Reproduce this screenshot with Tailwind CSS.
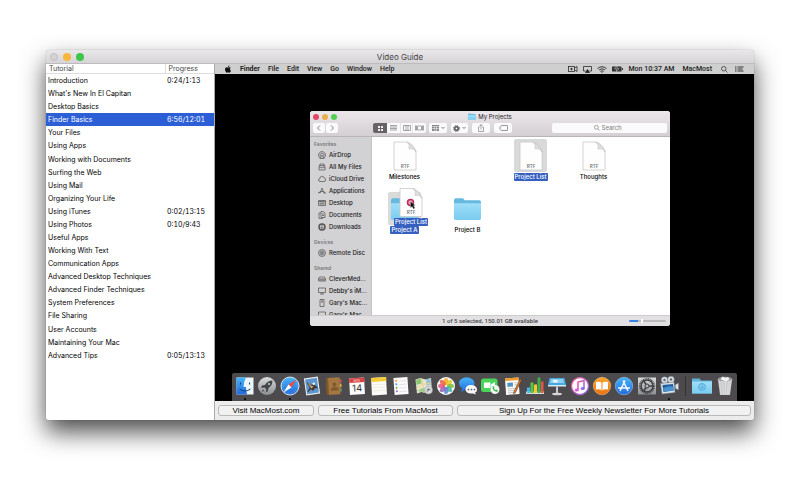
<!DOCTYPE html>
<html lang="en">
<head>
  <meta charset="UTF-8" />
  <meta name="viewport" content="width=device-width, initial-scale=1.0"/>
  <title>Video Guide</title>
  <script src="https://cdn.jsdelivr.net/npm/@tailwindcss/browser@4"></script>
</head>
<body class="bg-white text-black font-[Inter,sans-serif]">

  <!-- Shared symbols -->
  <svg class="absolute size-0" aria-hidden="true">
    <defs>
      <linearGradient id="sky" x1="0" y1="0" x2="0" y2="1"><stop offset="0" stop-color="#a0def8"/><stop offset="1" stop-color="#7accf0"/></linearGradient>
      <linearGradient id="blue" x1="0" y1="0" x2="0" y2="1"><stop offset="0" stop-color="#46b4f8"/><stop offset="1" stop-color="#2269dc"/></linearGradient>
      <linearGradient id="silver" x1="0" y1="0" x2="0" y2="1"><stop offset="0" stop-color="#d9dbdc"/><stop offset="1" stop-color="#8c9093"/></linearGradient>
      <linearGradient id="orange" x1="0" y1="0" x2="0" y2="1"><stop offset="0" stop-color="#fba52d"/><stop offset="1" stop-color="#ea7210"/></linearGradient>
      <linearGradient id="pink" x1="0" y1="0" x2="1" y2="1"><stop offset="0" stop-color="#f6529a"/><stop offset="1" stop-color="#8c68ea"/></linearGradient>
    </defs>
    <symbol id="folder" viewBox="0 0 30 24">
      <path d="M1 4q0-3 2-3h7q1 0 2 2h15q2 0 2 2v16q0 2-2 2H3q-2 0-2-2z" fill="#66b9df"/>
      <path d="M1 6h28v15q0 2-2 2H3q-2 0-2-2z" fill="url(#sky)"/>
    </symbol>
    <symbol id="rtf" viewBox="0 0 24 30">
      <path d="M1 1h14q5 3 8 9v19H1z" fill="#fefefe" stroke="#c9c9c9" stroke-width=".8"/>
      <path d="M14 1q3 2 2 7 5-1 7 3-2-7-9-10z" fill="#dedede" stroke="#b9b9b9" stroke-width=".5"/>
      <text x="12" y="26.500" text-anchor="middle" font-size="4.500" font-weight="600" fill="#777">RTF</text>
    </symbol>
  </svg>

  <main class="h-screen overflow-hidden pt-[50px] px-[46px] pb-20">
    <section class="flex h-full flex-col rounded-[3px] bg-[#ececec] shadow-[0_12px_24px_rgba(0,0,0,0.7),0_0_1px_rgba(0,0,0,0.5)]">

      <!-- Title bar -->
      <header class="grid h-[14px] shrink-0 grid-cols-3 items-center rounded-t-[3px] border-b border-[#bdbbbd] bg-linear-to-b from-[#e9e7e9] to-[#d6d4d6] px-1">
        <div class="flex gap-[5px]">
          <button aria-label="Close" class="size-2 rounded-full border border-[#c0c0c0] bg-[#d2d3d2]"></button>
          <button aria-label="Minimize" class="size-2 rounded-full bg-[#f6b73c]"></button>
          <button aria-label="Zoom" class="size-2 rounded-full bg-[#3fc548]"></button>
        </div>
        <h1 class="text-center text-[8px] leading-[12px] text-[#444]">Video Guide</h1>
      </header>

      <div class="flex min-h-0 flex-1">
        <!-- Tutorial list -->
        <aside class="w-[169px] shrink-0 overflow-hidden rounded-bl-[3px] border-r border-[#aaa] bg-white">
          <table class="h-[298px] w-full table-fixed border-collapse text-left text-[7px] leading-[13px]">
            <thead>
              <tr class="h-[9px] border-b border-[#ddd] leading-[9px] text-[#444]">
                <th class="w-[119px] border-r border-[#ddd] p-0 pl-[3px] font-normal">Tutorial</th>
                <th class="p-0 pl-[3px] font-normal">Progress</th>
              </tr>
            </thead>
            <tbody id="tutorials"></tbody>
          </table>
        </aside>

        <div class="flex min-w-0 flex-1 flex-col">
          <!-- Menu bar -->
          <nav class="flex h-[10px] shrink-0 items-center bg-[#cfcfcf] pl-[9px] pr-[10px] font-[Roboto,sans-serif] text-[7px] leading-[10px] font-medium text-[#222]">
            <svg class="mr-2 size-2" viewBox="0 0 24 24" fill="#111"><path d="M16.400 1.400c0 1.200-.5 2.300-1.200 3.100-.7.900-2 1.600-3 1.600-.5-1.300.2-2.600.9-3.400.8-.9 2.100-1.600 3.300-1.300zM21 17.100c0 .1-.5 1.600-1.500 3.100-1 1.400-2 2.800-3.500 2.800s-1.900-.9-3.600-.9-2.300.9-3.700.9-2.300-1.300-3.400-2.800C4 18.400 3 15.600 3 13c0-4.300 2.800-6.600 5.500-6.600 1.500 0 2.700 1 3.600 1s2.200-1 3.900-1c.6 0 2.900 0 4.400 2.200-.1.100-2.400 1.400-2.400 4.200 0 3.200 2.900 4.300 3 4.300z"/></svg>
            <div class="flex gap-2">
              <a href="#" class="font-bold">Finder</a>
              <a href="#">File</a>
              <a href="#">Edit</a>
              <a href="#">View</a>
              <a href="#">Go</a>
              <a href="#">Window</a>
              <a href="#">Help</a>
            </div>
            <div class="ml-auto flex items-center gap-[5px]">
              <svg class="h-[6px] w-[10px]" viewBox="0 0 20 12" fill="none" stroke="#222" stroke-width="1.500"><rect x="1" y="1" width="12" height="10"/><circle cx="7" cy="6" r="1.500" fill="#222"/><path d="M13 4l5-3v10l-5-3"/></svg>
              <svg class="h-[7px] w-[9px]" viewBox="0 0 18 14" fill="none" stroke="#222" stroke-width="1.500"><path d="M5 10H1V1h16v9h-4"/><path d="M9 7l4 6H5z" fill="#222"/></svg>
              <svg class="h-[7px] w-[10px]" viewBox="0 0 20 14" fill="none" stroke="#222" stroke-width="1.800"><path d="M1 5q9-7 18 0M4 8q6-5 12 0M7 11q3-3 6 0"/><circle cx="10" cy="12.500" r="1" fill="#222" stroke="none"/></svg>
              <svg class="h-[6px] w-[11px]" viewBox="0 0 22 12"><rect x="0" y="1" width="19" height="10" rx="1" fill="#333"/><path d="M20 4h2v4h-2z" fill="#333"/><path d="M8 1l-3 5h4v5l5-6h-4V1z" fill="#333" stroke="#ddd" stroke-width="1"/></svg>
              <span>Mon 10:37 AM</span>
              <span class="ml-[3px]">MacMost</span>
              <svg class="ml-[4px] size-[7px]" viewBox="0 0 14 14" fill="none" stroke="#333" stroke-width="1.500"><circle cx="5.500" cy="5.500" r="4.500"/><path d="M9 9l4 4"/></svg>
              <svg class="ml-[2px] h-[6px] w-[9px]" viewBox="0 0 18 12" stroke="#222" stroke-width="1.800"><path d="M0 2h3M5 2h12M0 6h3M5 6h10M0 10h3M5 10h12"/></svg>
            </div>
          </nav>

          <!-- Desktop -->
          <div class="relative min-h-0 flex-1 bg-black">

            <!-- Finder window -->
            <section class="absolute left-[95px] top-[37px] flex h-[215px] w-[360px] flex-col overflow-hidden rounded-[3px] bg-white text-[6px] leading-[8px] font-medium text-[#222]">
              <header class="flex h-[26px] shrink-0 flex-col border-b border-[#b8b4b8] bg-linear-to-b from-[#ebe7eb] to-[#d3cfd3]">
                <div class="grid h-[11px] grid-cols-3 items-center px-[3px]">
                  <div class="flex gap-[3px]">
                    <button aria-label="Close" class="size-[6px] rounded-full bg-[#e2476a]"></button>
                    <button aria-label="Minimize" class="size-[6px] rounded-full bg-[#e8b04a]"></button>
                    <button aria-label="Zoom" class="size-[6px] rounded-full bg-[#52d053]"></button>
                  </div>
                  <h2 class="flex items-center justify-center gap-[2px] font-normal"><svg class="h-[7px] w-2"><use href="#folder"/></svg>My Projects</h2>
                </div>
                <div class="flex h-3 items-center px-[3px]">
                  <div class="flex gap-px">
                    <button aria-label="Back" class="grid h-[10px] w-3 place-items-center rounded-[2px] bg-[#fafafa]"><svg class="size-[6px]" viewBox="0 0 12 12" fill="none" stroke="#555" stroke-width="1.500"><path d="M8 1L3 6l5 5"/></svg></button>
                    <button aria-label="Forward" class="grid h-[10px] w-3 place-items-center rounded-[2px] bg-[#fafafa]"><svg class="size-[6px]" viewBox="0 0 12 12" fill="none" stroke="#555" stroke-width="1.500"><path d="M4 1l5 5-5 5"/></svg></button>
                  </div>
                  <div class="ml-[35px] flex h-[10px] overflow-hidden rounded-[2px] bg-[#fafafa]">
                    <button aria-label="Icons" class="grid w-[14px] place-items-center bg-[#666467]"><svg class="size-[5px]" viewBox="0 0 10 10" fill="#eee"><path d="M0 0h4v4H0zM6 0h4v4H6zM0 6h4v4H0zM6 6h4v4H6z"/></svg></button>
                    <button aria-label="List" class="grid w-[13px] place-items-center"><svg class="h-[6px] w-[7px]" viewBox="0 0 14 12" stroke="#888" stroke-width="1.500"><path d="M0 1h14M0 4h14M0 7h14M0 10h14"/></svg></button>
                    <button aria-label="Columns" class="grid w-[13px] place-items-center border-x border-[#e4e4e4]"><svg class="h-[6px] w-[8px]" viewBox="0 0 16 12" fill="none" stroke="#888" stroke-width="1.500"><path d="M1 1h14v10H1zM6 1v10M10 1v10"/></svg></button>
                    <button aria-label="Cover Flow" class="grid w-[13px] place-items-center"><svg class="h-[6px] w-[9px]" viewBox="0 0 18 12" fill="none" stroke="#888" stroke-width="1.500"><path d="M5 2h8v8H5zM1 1v10M3 1v10M15 1v10M17 1v10"/></svg></button>
                  </div>
                  <button aria-label="Arrange" class="ml-[3px] flex h-[10px] w-[18px] items-center justify-center gap-[2px] rounded-[2px] bg-[#fafafa]"><svg class="h-[6px] w-[7px]" viewBox="0 0 14 12" fill="#888"><path d="M0 0h14v2H0zM0 3h4v4H0zM5 3h4v4H5zM10 3h4v4h-4zM0 8h4v4H0zM5 8h4v4H5zM10 8h4v4h-4z"/></svg><svg class="size-1" viewBox="0 0 8 8" fill="none" stroke="#555" stroke-width="1.500"><path d="M1 2l3 3 3-3"/></svg></button>
                  <button aria-label="Action" class="ml-1 flex h-[10px] w-[17px] items-center justify-center gap-[2px] rounded-[2px] bg-[#fafafa]"><svg class="size-[7px]" viewBox="0 0 14 14" fill="none" stroke="#555"><circle cx="7" cy="7" r="6" stroke-width="2" stroke-dasharray="2.400 2.300"/><circle cx="7" cy="7" r="3.500" stroke-width="3"/></svg><svg class="size-1" viewBox="0 0 8 8" fill="none" stroke="#555" stroke-width="1.500"><path d="M1 2l3 3 3-3"/></svg></button>
                  <button aria-label="Share" class="ml-1 grid h-[10px] w-[18px] place-items-center rounded-[2px] bg-[#fafafa]"><svg class="size-[8px]" viewBox="0 0 16 16" fill="none" stroke="#777" stroke-width="1.300"><path d="M5 6H3v9h10V6h-2M8 11V1M5 4l3-3 3 3"/></svg></button>
                  <button aria-label="Tags" class="ml-1 grid h-[10px] w-[18px] place-items-center rounded-[2px] bg-[#fafafa]"><svg class="h-[6px] w-[9px]" viewBox="0 0 18 12" fill="none" stroke="#777" stroke-width="1.500"><path d="M1 6l4-5h11q1 0 1 1v8q0 1-1 1H5z"/></svg></button>
                  <label class="ml-auto flex h-[10px] w-[115px] items-center justify-center gap-[2px] rounded-[2px] bg-[#fafafa]">
                    <svg class="size-[6px]" viewBox="0 0 14 14" fill="none" stroke="#777" stroke-width="1.500"><circle cx="5.500" cy="5.500" r="4.500"/><path d="M9 9l4 4"/></svg>
                    <input type="text" aria-label="Search" placeholder="Search" class="w-6 bg-transparent outline-none placeholder:text-[#888]" />
                  </label>
                </div>
              </header>

              <div class="flex min-h-0 flex-1">
                <nav class="w-[62px] shrink-0 overflow-hidden border-r border-[#c4c4c6] bg-[#d2d1d4] pl-1 pt-[2px]">
                  <h3 class="text-[5px] leading-[10px] font-semibold text-[#777]">Favorites</h3>
                  <ul id="favorites"></ul>
                  <h3 class="mt-1 text-[5px] leading-[10px] font-semibold text-[#777]">Devices</h3>
                  <ul id="devices"></ul>
                  <h3 class="mt-1 text-[5px] leading-[10px] font-semibold text-[#777]">Shared</h3>
                  <ul id="shared"></ul>
                </nav>

                <!-- Files -->
                <div class="grid flex-1 grid-cols-[repeat(4,63px)] content-start gap-y-[11px] pl-px pt-[2px] text-black">
                  <figure class="flex flex-col items-center gap-px">
                    <div class="grid size-[33px] place-items-center"><svg class="h-[30px] w-6"><use href="#rtf"/></svg></div>
                    <figcaption class="px-[2px]">Milestones</figcaption>
                  </figure>
                  <figure class="col-start-3 flex flex-col items-center gap-px">
                    <div class="grid size-[33px] place-items-center rounded-[2px] bg-[#d9d9d9]"><svg class="h-[30px] w-6"><use href="#rtf"/></svg></div>
                    <figcaption class="rounded-[1px] bg-[#3560bf] px-px text-white">Project List</figcaption>
                  </figure>
                  <figure class="flex flex-col items-center gap-px">
                    <div class="grid size-[33px] place-items-center"><svg class="h-[30px] w-6"><use href="#rtf"/></svg></div>
                    <figcaption class="px-[2px]">Thoughts</figcaption>
                  </figure>
                  <figure class="relative flex flex-col items-center gap-px">
                    <div class="grid size-[33px] place-items-center rounded-[2px] bg-[#dadada]"><svg class="h-6 w-[29px]"><use href="#folder"/></svg></div>
                    <figcaption class="rounded-[1px] bg-[#3560bf] px-px text-white">Project A</figcaption>
                    <!-- File being dragged onto the folder -->
                    <div class="absolute -top-[5px] left-[21px] flex flex-col items-center">
                      <svg class="h-[31px] w-6"><use href="#rtf"/></svg>
                      <span class="rounded-[1px] bg-[#3560bf] px-px whitespace-nowrap text-white">Project List</span>
                      <svg class="absolute left-[12px] top-[11px] size-3" viewBox="0 0 24 24"><circle cx="9" cy="9" r="6" fill="#eb9cb2" stroke="#ba2d59" stroke-width="3"/><path d="M9 7v13l3-3 3 5 3-2-3-5h4z" fill="#111" stroke="#fff" stroke-width=".5"/></svg>
                    </div>
                  </figure>
                  <figure class="flex flex-col items-center gap-px">
                    <div class="grid size-[33px] place-items-center"><svg class="h-6 w-[29px]"><use href="#folder"/></svg></div>
                    <figcaption class="px-[2px]">Project B</figcaption>
                  </figure>
                </div>
              </div>

              <footer class="relative flex h-[11px] shrink-0 items-center justify-center border-t border-[#ccc] bg-[#e2e0e3] font-[Roboto,sans-serif] text-[#444]">
                <p>1 of 5 selected, 150.01 GB available</p>
                <input type="range" aria-label="Icon size" value="35" class="absolute right-1 h-[2px] w-[37px] appearance-none rounded bg-linear-to-r from-[#3b82e6] from-25% to-[#bbb] to-25% [&::-webkit-slider-thumb]:h-1 [&::-webkit-slider-thumb]:w-[2px] [&::-webkit-slider-thumb]:appearance-none [&::-webkit-slider-thumb]:bg-white" />
              </footer>
            </section>

            <!-- Dock -->
            <div class="absolute inset-x-[17px] bottom-0 flex h-7 items-start rounded-t-[2px] bg-[#4c4a4d] pl-[3px] pr-[2px] pt-[3px]">
              <div class="flex w-[444px] justify-between">
                <!-- Finder -->
                <div class="flex flex-col items-center gap-[2px]">
                  <svg class="size-5" viewBox="0 0 40 40"><path d="M3 3h34v34H3z" fill="#eef5fa"/><path d="M3 3h19q-5 9-5 19h5q0 8 2 15H3z" fill="url(#blue)"/><path d="M11 13v4M29 13v4M9 26q11 8 22 0" fill="none" stroke="#143f70" stroke-width="2"/></svg>
                  <span class="size-[2px] rounded-full bg-black"></span>
                </div>
                <!-- Launchpad -->
                <svg class="size-5" viewBox="0 0 40 40"><circle cx="20" cy="20" r="18" fill="url(#silver)"/><path d="M31 9q-10 0-15 9l-6 1-2 5 7-1 4 4-2 6 5-3 1-6q8-5 8-15zM12 27l-3 5 6-3z" fill="#424549"/><circle cx="24" cy="16" r="2" fill="#ccc"/></svg>
                <!-- Safari -->
                <div class="flex flex-col items-center gap-[2px]">
                  <svg class="size-5" viewBox="0 0 40 40"><circle cx="20" cy="20" r="18" fill="url(#blue)" stroke="#dbe7ee" stroke-width="2"/><circle cx="20" cy="20" r="14" fill="none" stroke="#a5dbfb" stroke-dasharray="1 2"/><path d="M33 7L17 17l6 6z" fill="#f04a3e"/><path d="M7 33l10-16 6 6z" fill="#fff"/></svg>
                  <span class="size-[2px] rounded-full bg-black"></span>
                </div>
                <!-- Mail -->
                <svg class="size-5" viewBox="0 0 40 40"><g transform="rotate(-8 20 20)"><path d="M6 3h28v34H6z" fill="#f3f3ee"/><path d="M8 5h24v30H8z" fill="#5d97d1"/><path d="M9 30l6-7-5-13 9 8 5-4 2 5 6 7-7-1-4 5-4-4-6 5z" fill="#453a32"/><path d="M12 12l7 8 4 1-5 4z" fill="#d8b480"/><circle cx="24" cy="16" r="2.500" fill="#fff"/></g></svg>
                <!-- Contacts -->
                <svg class="size-5" viewBox="0 0 40 40"><g transform="rotate(-3 20 20)"><path d="M5 3h27v34H5z" fill="#a47740"/><path d="M5 3h4v34H5z" fill="#7d5527"/><path d="M32 7h3v7h-3z" fill="#d55"/><path d="M32 16h3v7h-3z" fill="#d9b84a"/><path d="M32 25h3v7h-3z" fill="#6a9c5c"/><circle cx="21" cy="17" r="4" fill="#83592c"/><path d="M13 29q0-7 8-7t8 7z" fill="#83592c"/></g></svg>
                <!-- Calendar -->
                <svg class="size-5" viewBox="0 0 40 40"><g transform="rotate(-3 20 20)"><path d="M5 4h30v33H5z" fill="#fafafa"/><path d="M5 4h30v9H5z" fill="#d94343"/><text x="20" y="11" text-anchor="middle" font-size="6" fill="#fff">NOV</text><text x="20" y="31" text-anchor="middle" font-size="19" fill="#333">14</text></g></svg>
                <!-- Notes -->
                <svg class="size-5" viewBox="0 0 40 40"><g transform="rotate(-3 20 20)"><path d="M5 3h30v35H5z" fill="#fbfaf4"/><path d="M5 3h30v8H5z" fill="#f3cc38"/><path d="M7 17h26M7 23h26M7 29h26" stroke="#e1dfd6"/></g></svg>
                <!-- Reminders -->
                <svg class="size-5" viewBox="0 0 40 40"><g transform="rotate(-4 20 20)"><path d="M6 3h28v34H6z" fill="#fbfbfb"/><circle cx="11" cy="9" r="2" fill="#f2a335"/><circle cx="11" cy="16" r="2" fill="#43a4e4"/><circle cx="11" cy="23" r="2" fill="#62b94d"/><circle cx="11" cy="30" r="2" fill="#9c66c5"/><path d="M16 10h15M16 17h15M16 24h15M16 31h15" stroke="#ccc"/></g></svg>
                <!-- Maps -->
                <svg class="size-5" viewBox="0 0 40 40"><path d="M3 7l10-3 10 3 11-3 2 28-11 2-10-2-9 3z" fill="#e6e6d2"/><path d="M4 8l10-3 1 10-10 3z" fill="#8ec66f"/><path d="M24 7l9-2 1 12-9 2z" fill="#8ec3df"/><path d="M5 25l12-8 17-3M17 6l3 27" fill="none" stroke="#efd387" stroke-width="2"/><path d="M6 30l10-6 8 2-4 7z" fill="#a3cd8a"/><circle cx="29" cy="28" r="8" fill="#dadada" stroke="#999"/><path d="M25 32l3-8 5 3z" fill="#718089"/></svg>
                <!-- Photos -->
                <svg class="size-5" viewBox="0 0 40 40"><circle cx="20" cy="20" r="18" fill="#fafafa"/><g fill-opacity=".88"><ellipse cx="20" cy="11" rx="4.500" ry="7" fill="#f7a928"/><ellipse cx="20" cy="11" rx="4.500" ry="7" fill="#e0cd2c" transform="rotate(45 20 20)"/><ellipse cx="20" cy="11" rx="4.500" ry="7" fill="#7fbf40" transform="rotate(90 20 20)"/><ellipse cx="20" cy="11" rx="4.500" ry="7" fill="#48b8a6" transform="rotate(135 20 20)"/><ellipse cx="20" cy="11" rx="4.500" ry="7" fill="#5b87d0" transform="rotate(180 20 20)"/><ellipse cx="20" cy="11" rx="4.500" ry="7" fill="#9866ba" transform="rotate(225 20 20)"/><ellipse cx="20" cy="11" rx="4.500" ry="7" fill="#dc5b8d" transform="rotate(270 20 20)"/><ellipse cx="20" cy="11" rx="4.500" ry="7" fill="#ee6343" transform="rotate(315 20 20)"/></g></svg>
                <!-- Messages -->
                <svg class="size-5" viewBox="0 0 40 40"><path d="M17 3c9 0 16 5 16 12s-7 13-16 13l-4-1q-4 5-8 5 3-3 3-7-6-4-6-10C2 8 8 3 17 3z" fill="url(#blue)"/><path d="M26 18c7 0 12 4 12 9 0 3-1 5-4 6l2 4-6-2c-9 1-15-3-15-8s4-9 11-9z" fill="#f6f6f6"/><circle cx="21" cy="27" r="1.700" fill="#555"/><circle cx="27" cy="27" r="1.700" fill="#555"/><circle cx="33" cy="27" r="1.700" fill="#555"/></svg>
                <!-- FaceTime -->
                <svg class="size-5" viewBox="0 0 40 40"><rect x="2" y="5" width="33" height="27" rx="5" fill="#4bd45a"/><path d="M8 13h13v11H8zM22 17l8-5v13l-8-4z" fill="#fff"/><circle cx="30" cy="27" r="9" fill="#f2f2f2"/><path d="M25 22q0 8 9 10l2-3-3-2-2 1-3-3 1-2-2-3z" fill="#43bc50"/></svg>
                <!-- Pages -->
                <svg class="size-5" viewBox="0 0 40 40"><g transform="rotate(-4 20 20)"><path d="M5 4h27v33H5z" fill="#f8f8f4"/><path d="M5 4h27v5H5z" fill="#f09a28"/><path d="M9 13h11v8H9z" fill="#5291c2"/><path d="M23 14h6M23 18h6M9 25h19M9 29h19M9 33h15" stroke="#999"/></g><path d="M34 6l3 2-12 25-4 3 1-5z" fill="#d8792c" stroke="#5b3823"/></svg>
                <!-- Numbers -->
                <svg class="size-5" viewBox="0 0 40 40"><path d="M2 31h36v5H2z" fill="#d9d9d9"/><path d="M4 23h6v11H4z" fill="#45b8ed"/><path d="M11 13h6v21h-6z" fill="#56c942"/><path d="M18 17h6v17h-6z" fill="#f6c938"/><path d="M25 3h6v31h-6z" fill="#3eb04b"/><path d="M32 11h5v23h-5z" fill="#e85445"/></svg>
                <!-- Keynote -->
                <svg class="size-5" viewBox="0 0 40 40"><path d="M5 4h30l3 14H2z" fill="#48a9df"/><path d="M8 6h24l2 8H6z" fill="#8dd0ef"/><path d="M12 8h9v5h-9z" fill="#eefaff"/><path d="M2 18h36v3H2z" fill="#d8edf6"/><path d="M18 21h4v14h-4z" fill="#c5cbd0"/><ellipse cx="20" cy="36" rx="10" ry="2.500" fill="#d3d7d9"/></svg>
                <!-- iTunes -->
                <svg class="size-5" viewBox="0 0 40 40"><circle cx="20" cy="20" r="17" fill="#fbf9fc" stroke="url(#pink)" stroke-width="2.500"/><path d="M16 28V12l12-3v16" fill="none" stroke="url(#pink)" stroke-width="3"/><ellipse cx="13.500" cy="28" rx="4" ry="3" fill="#d75dcd"/><ellipse cx="25.500" cy="25" rx="4" ry="3" fill="#8c68ea"/></svg>
                <!-- iBooks -->
                <svg class="size-5" viewBox="0 0 40 40"><circle cx="20" cy="20" r="17.500" fill="url(#orange)" stroke="#f7c489"/><path d="M20 14q-5-4-12-2v15q7-2 12 2 5-4 12-2V12q-7-2-12 2z" fill="#fff"/><path d="M20 14v14" stroke="#ee8520" stroke-width="2"/></svg>
                <!-- App Store -->
                <svg class="size-5" viewBox="0 0 40 40"><circle cx="20" cy="20" r="17.500" fill="url(#blue)" stroke="#a9d3f3"/><path d="M22 9L12 30M18 9l10 21M8 24h24" fill="none" stroke="#f7fbff" stroke-width="3"/></svg>
                <!-- System Preferences -->
                <svg class="size-5" viewBox="0 0 40 40"><path d="M2 3h36v34H2z" fill="url(#silver)"/><g fill="none" stroke="#3c3e40"><circle cx="20" cy="20" r="14.500" stroke-width="3" stroke-dasharray="2 1.500"/><circle cx="20" cy="20" r="12" stroke-width="3"/><circle cx="20" cy="20" r="4" stroke-width="2"/><path d="M24 20h9M18 17l-5-8M18 23l-5 8" stroke-width="3"/></g></svg>
                <!-- Movie recorder -->
                <div class="flex flex-col items-center gap-[2px]">
                  <svg class="size-5" viewBox="0 0 40 40"><g fill="#dce3e8" stroke="#777f88"><circle cx="11" cy="8" r="6.500"/><circle cx="24" cy="7" r="6.500"/><path d="M3 15l27-3 2 21-26 3zM32 18l7-4v14l-6-3z"/></g><path d="M7 18l21-2 1 13-20 3z" fill="#245d9f"/><path d="M8 25q11-7 21-3l1 7-21 2z" fill="#4794d0"/><circle cx="11" cy="8" r="2.500" fill="#667"/><circle cx="24" cy="7" r="2.500" fill="#667"/></svg>
                  <span class="size-[2px] rounded-full bg-black"></span>
                </div>
              </div>
              <span class="ml-[6px] h-5 w-px bg-[#333]"></span>
              <!-- Downloads and trash -->
              <svg class="ml-auto mr-[3px] size-5" viewBox="0 0 40 40"><path d="M0 5h15l3 4h22v26H0z" fill="#61b2da"/><path d="M0 11h40v24H0z" fill="url(#sky)"/><circle cx="20" cy="22" r="7" fill="#83cbed" stroke="#55addb" stroke-width="2"/><path d="M20 17v9M16 22l4 4 4-4" fill="none" stroke="#55addb" stroke-width="2"/></svg>
              <svg class="size-5" viewBox="0 0 40 40"><path d="M6 7h28l-4 31H10z" fill="#c9cccd"/><path d="M9 9l3 27M15 9l2 28M21 9v28M27 9l-2 28M32 9l-4 27" stroke="#eee"/><ellipse cx="20" cy="7" rx="14" ry="4.500" fill="#8c8f90" stroke="#eee"/><path d="M11 7l4-6 6 3 5-2 3 6-8 3z" fill="#f2f2f2"/></svg>
            </div>
          </div>

          <!-- Bottom buttons -->
          <footer class="flex h-[19px] shrink-0 items-center gap-1 rounded-br-[3px] bg-[#ececec] px-[3px] font-['Liberation_Sans',sans-serif] text-[8px] leading-[9px]">
            <button class="h-[11px] w-24 rounded-[3px] border border-[#b9b9b9] bg-[#f1f1f1]">Visit MacMost.com</button>
            <button class="h-[11px] w-[135px] rounded-[3px] border border-[#b9b9b9] bg-[#f1f1f1]">Free Tutorials From MacMost</button>
            <button class="h-[11px] flex-1 rounded-[3px] border border-[#b9b9b9] bg-[#f1f1f1]">Sign Up For the Free Weekly Newsletter For More Tutorials</button>
          </footer>
        </div>
      </div>
    </section>
  </main>

  <script>
    const tutorials = [
      ["Introduction", "0:24/1:13"],
      ["What's New In El Capitan", ""],
      ["Desktop Basics", ""],
      ["Finder Basics", "6:56/12:01"],
      ["Your Files", ""],
      ["Using Apps", ""],
      ["Working with Documents", ""],
      ["Surfing the Web", ""],
      ["Using Mail", ""],
      ["Organizing Your Life", ""],
      ["Using iTunes", "0:02/13:15"],
      ["Using Photos", "0:10/9:43"],
      ["Useful Apps", ""],
      ["Working With Text", ""],
      ["Communication Apps", ""],
      ["Advanced Desktop Techniques", ""],
      ["Advanced Finder Techniques", ""],
      ["System Preferences", ""],
      ["File Sharing", ""],
      ["User Accounts", ""],
      ["Maintaining Your Mac", ""],
      ["Advanced Tips", "0:05/13:13"]
    ];

    document.getElementById("tutorials").innerHTML = tutorials.map(([name, progress]) => `
      <tr class="${name === "Finder Basics" ? "bg-[#2c5fd6] text-white" : ""}">
        <td class="p-0 pl-[2px] whitespace-nowrap">${name}</td>
        <td class="p-0 pl-[2px] tabular-nums">${progress}</td>
      </tr>`).join("");

    // 16x16 outlines for the Finder sidebar
    const icons = {
      airdrop: '<path d="M4 14a7 7 0 1 1 8 0M5 11a4 4 0 1 1 6 0M8 8l4 7H4z"/>',
      files: '<path d="M2 8l2-6h8l2 6v6H2zM2 8h4l1 2h2l1-2h4M4 5h8"/>',
      cloud: '<path d="M4 13a3 3 0 0 1 0-6 4 4 0 0 1 8-1 3.500 3.500 0 0 1 0 7z"/>',
      apps: '<path d="M4 12L8 2l4 10M5 9h6M1 13l3-4M12 9l3 4M1 11h4M11 12h4"/>',
      desktop: '<path d="M1 3h14v10H1zM1 5h14M3 8h10M3 10h10"/>',
      docs: '<path d="M6 1h5l3 3v9H6zM6 4H2v11h7v-2M8 6h4M8 9h4"/>',
      down: '<circle cx="8" cy="8" r="6" stroke-width="3"/><path d="M8 4v7M5 8l3 3 3-3"/>',
      disc: '<circle cx="8" cy="8" r="7"/><circle cx="8" cy="8" r="4"/><circle cx="8" cy="8" r="1.500"/>',
      drive: '<path d="M3 4h10l2 4v4H1V8zM1 8h14M3 10h10"/>',
      imac: '<path d="M1 2h14v9H1zM8 11v3M4 14h8"/>',
      tower: '<path d="M4 1h8v14H4zM6 4h4M6 6h4"/>'
    };
    const groups = {
      favorites: [["airdrop", "AirDrop"], ["files", "All My Files"], ["cloud", "iCloud Drive"], ["apps", "Applications"], ["desktop", "Desktop"], ["docs", "Documents"], ["down", "Downloads"]],
      devices: [["disc", "Remote Disc"]],
      shared: [["drive", "CleverMed..."], ["imac", "Debby's iM..."], ["tower", "Gary's Mac..."], ["imac", "Gary's Mac..."]]
    };

    for (const id in groups) {
      document.getElementById(id).innerHTML = groups[id].map(([icon, label]) => `
        <li>
          <a href="#" class="flex h-3 items-center gap-[3px] pl-1 whitespace-nowrap">
            <svg class="size-2 shrink-0" viewBox="0 0 16 16" fill="none" stroke="#555" stroke-width="1.500">${icons[icon]}</svg>${label}
          </a>
        </li>`).join("");
    }
  </script>

</body>
</html>
